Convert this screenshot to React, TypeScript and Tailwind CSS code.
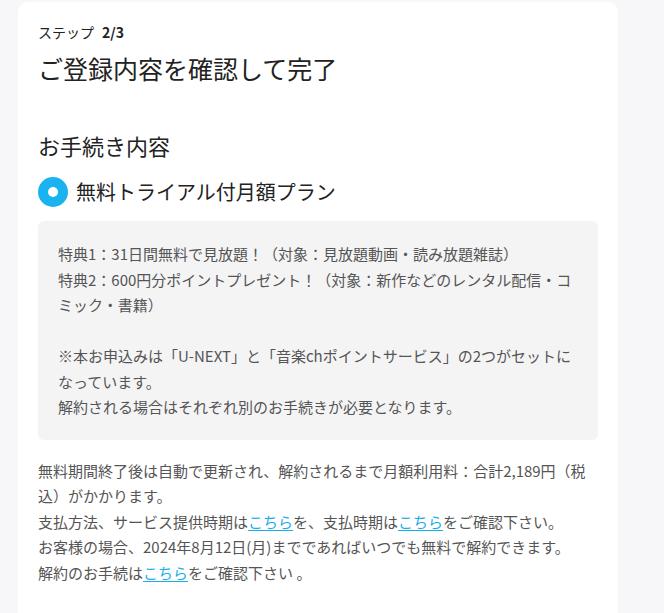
const font = { fontFamily: '"Noto Sans CJK JP", "Noto Sans", sans-serif' };

function Link({ children }: { children: React.ReactNode }) {
  return <a className="text-[#19aee8] underline underline-offset-2">{children}</a>;
}

export default function App() {
  return (
    <div className="min-h-[613px] bg-[#f7f7f9] pl-[18px] pt-[2px]" style={font}>
      <div className="w-[600px] min-h-[640px] rounded-t-[10px] bg-white px-5 pt-5 pb-10">
        <p className="text-[14px] leading-[20px] text-[#222]">
          ステップ<span className="ml-2 font-bold">2/3</span>
        </p>
        <h1 className="mt-[8px] text-[25px] leading-[36px] text-[#222]">ご登録内容を確認して完了</h1>

        <h2 className="mt-[43px] text-[22px] leading-[32px] text-[#222]">お手続き内容</h2>

        <div className="mt-[16px] flex items-center gap-2">
          <span className="flex h-[30px] w-[30px] items-center justify-center rounded-full bg-[#19b4f0]">
            <span className="h-[10px] w-[10px] rounded-full bg-white" />
          </span>
          <span className="text-[20px] leading-[30px] text-[#222]">無料トライアル付月額プラン</span>
        </div>

        <div className="mt-[14px] rounded-[6px] bg-[#f4f4f5] p-5 text-[15px] leading-[1.7] text-[#555]">
          <p>特典1：31日間無料で見放題！（対象：見放題動画・読み放題雑誌）</p>
          <p>特典2：600円分ポイントプレゼント！（対象：新作などのレンタル配信・コミック・書籍）</p>
          <br />
          <p>※本お申込みは「U-NEXT」と「音楽chポイントサービス」の2つがセットになっています。</p>
          <p>解約される場合はそれぞれ別のお手続きが必要となります。</p>
        </div>

        <div className="mt-[18px] text-[15px] leading-[1.7] text-[#555]">
          <p>無料期間終了後は自動で更新され、解約されるまで月額利用料：合計2,189円（税込）がかかります。</p>
          <p>
            支払方法、サービス提供時期は<Link>こちら</Link>を、支払時期は<Link>こちら</Link>をご確認下さい。
          </p>
          <p>お客様の場合、2024年8月12日(月)までであればいつでも無料で解約できます。</p>
          <p>
            解約のお手続は<Link>こちら</Link>をご確認下さい 。
          </p>
        </div>
      </div>
    </div>
  );
}
